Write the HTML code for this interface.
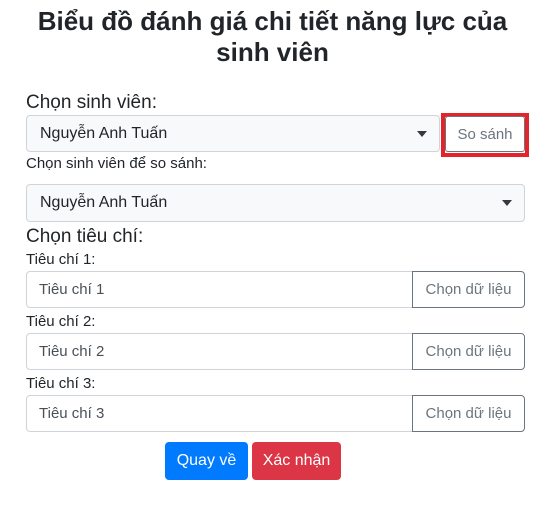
<!DOCTYPE html>
<html><head><meta charset="utf-8"><style>
body{margin:0;background:#fff;font-family:"Liberation Sans","DejaVu Sans",sans-serif;color:#212529;width:545px;height:509px;position:relative;overflow:hidden}
.a{position:absolute}
h1{position:absolute;left:0;width:545px;top:6px;margin:0;text-align:center;font-size:26px;line-height:31px;font-weight:bold;color:#212529}
.h{font-size:19px;font-weight:500}
.l{font-size:15px}
.sel{border:1px solid #ced4da;border-radius:4px;background:#f8f9fa;box-sizing:border-box;font-size:16px;padding-left:13px;display:flex;align-items:center}
.car{position:absolute;right:12px;top:50%;margin-top:-3px;border-left:5px solid transparent;border-right:5px solid transparent;border-top:6px solid #343a40}
.inp{border:1px solid #ced4da;border-radius:4px 0 0 4px;box-sizing:border-box;font-size:15px;padding-left:12px;display:flex;align-items:center;color:#495057}
.btn{border:1px solid #6c757d;border-radius:0 4px 4px 0;box-sizing:border-box;font-size:15px;color:#6c757d;display:flex;align-items:center;justify-content:center}
.b{border-radius:4px;color:#fff;font-size:16px;display:flex;align-items:center;justify-content:center}
</style></head><body>
<h1>Biểu đồ đánh giá chi tiết năng lực của<br>sinh viên</h1>
<div class="a h" style="left:26px;top:92px">Chọn sinh viên:</div>
<div class="a sel" style="left:26px;top:115px;width:414px;height:37px">Nguyễn Anh Tuấn<span class="car"></span></div>
<div class="a" style="left:441px;top:113px;width:88px;height:44px;box-sizing:border-box;border:4px solid #e3242b"></div>
<div class="a" style="left:445px;top:116px;width:80px;height:36px;box-sizing:border-box;border:1px solid #6c757d;border-radius:3px;font-size:15px;color:#6c757d;display:flex;align-items:center;justify-content:center">So sánh</div>
<div class="a l" style="left:26px;top:155px">Chọn sinh viên để so sánh:</div>
<div class="a sel" style="left:26px;top:184px;width:499px;height:38px">Nguyễn Anh Tuấn<span class="car"></span></div>
<div class="a h" style="left:26px;top:226px">Chọn tiêu chí:</div>

<div class="a l" style="left:26px;top:251px">Tiêu chí 1:</div>
<div class="a inp" style="left:26px;top:271px;width:387px;height:37px">Tiêu chí 1</div>
<div class="a btn" style="left:412px;top:271px;width:113px;height:37px">Chọn dữ liệu</div>

<div class="a l" style="left:26px;top:313px">Tiêu chí 2:</div>
<div class="a inp" style="left:26px;top:333px;width:387px;height:37px">Tiêu chí 2</div>
<div class="a btn" style="left:412px;top:333px;width:113px;height:37px">Chọn dữ liệu</div>

<div class="a l" style="left:26px;top:375px">Tiêu chí 3:</div>
<div class="a inp" style="left:26px;top:395px;width:387px;height:37px">Tiêu chí 3</div>
<div class="a btn" style="left:412px;top:395px;width:113px;height:37px">Chọn dữ liệu</div>

<div class="a b" style="left:165px;top:442px;width:83px;height:38px;background:#007bff">Quay về</div>
<div class="a b" style="left:252px;top:442px;width:89px;height:38px;background:#dc3545">Xác nhận</div>
</body></html>
